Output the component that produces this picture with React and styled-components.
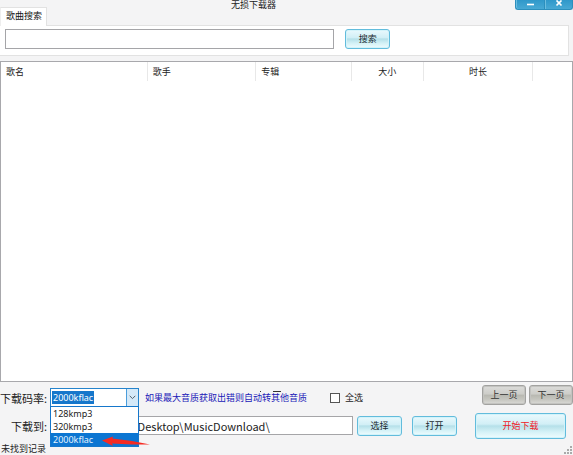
import React, { useState } from "react";
import styled, { createGlobalStyle } from "styled-components";

const GlobalStyle = createGlobalStyle`
  *, *::before, *::after { box-sizing: border-box; }
  body {
    margin: 0;
    background: #f4f4f5;
    color: #222;
    font: 9px/12px "Noto Sans", "Noto Sans CJK SC", sans-serif;
  }
  button, input, select { font: inherit; color: inherit; margin: 0; }
`;

const Window = styled.main`
  display: flex;
  flex-direction: column;
  height: 100vh;
  overflow: hidden;
  position: relative;
`;

const TitleBar = styled.header`
  display: flex;
  height: 7px;
  flex: none;
`;

const Title = styled.h1`
  flex: 1;
  margin: 0;
  padding-right: 8px;
  font-size: 9px;
  font-weight: 400;
  line-height: 9px;
  text-align: center;
`;

const WindowButton = styled.button`
  display: flex;
  align-items: flex-start;
  justify-content: center;
  width: 29px;
  height: 10px;
  padding: 0;
  border: 1px solid #2c8fbd;
  border-top: 0;
  border-right-width: ${(p) => (p.$last ? "1px" : "0")};
  border-radius: ${(p) => (p.$last ? "0 0 3px 0" : "0 0 0 3px")};
  background: linear-gradient(#2f98ca, #48a9d4);
  box-shadow: inset 1px 0 #6cbddf;
`;

const TabList = styled.div`
  display: flex;
  flex: none;
`;

const Tab = styled.button`
  height: 19px;
  padding: 0 4px 2px 5px;
  border: 1px solid #e2e2e2;
  border-bottom: 0;
  border-left-color: #eee;
  background: #fff;
  margin-bottom: -1px;
  z-index: 1;
  color: #111;
`;

const SearchPanel = styled.form`
  display: flex;
  align-items: center;
  gap: 11px;
  flex: none;
  height: 31px;
  margin-right: 4px;
  padding: 0 0 4px 5px;
  border: 1px solid #e2e2e2;
  border-left: 0;
  background: #fff;
`;

const TextInput = styled.input`
  min-width: 0;
  height: ${(p) => (p.$path ? "19px" : "20px")};
  width: ${(p) => (p.$path ? "auto" : "58.5%")};
  flex: ${(p) => (p.$path ? "1" : "none")};
  padding: 0 2px;
  border: 1px solid #a5a5a8;
  border-radius: 0;
  background: #fff;
  font-family: "Noto Sans CJK SC", sans-serif;
  font-size: 11px;
  outline: 0;
`;

const GlassButton = styled.button`
  flex: none;
  width: ${(p) => (p.$large ? "91px" : "45px")};
  height: ${(p) => (p.$large ? "26px" : "20px")};
  padding: 0;
  border: 1px solid #62bcdc;
  border-radius: 3px;
  background: linear-gradient(#e9f9fd 0%, #d2eff6 42%, #b5e0e9 50%, #d5f2f7 75%, #effcfe 100%);
  box-shadow: inset 0 0 0 1px #d3f3fa;
  color: ${(p) => (p.$large ? "#f02028" : "#1c2b30")};
`;

const PageButton = styled.button`
  width: 44px;
  height: 20px;
  padding: 0;
  border: 1px solid #a2a2a0;
  border-radius: 3px;
  background: linear-gradient(#dcdcda 0%, #cdcdc9 44%, #b9b9b2 52%, #c6c6c0 75%, #dadad7 100%);
  box-shadow: inset 0 0 0 1px #c3c3c0;
  color: #333;
`;

const Results = styled.section`
  flex: 1;
  min-height: 0;
  margin-top: 5px;
  border: 1px solid #a8a8ac;
  background: #fff;
`;

const Table = styled.table`
  width: 100%;
  border-collapse: collapse;
  table-layout: fixed;
`;

const HeadCell = styled.th`
  width: ${(p) => p.$width};
  height: 19px;
  padding: 0 5px;
  border-right: ${(p) => (p.$end ? "0" : "1px solid #e8e8e8")};
  font-weight: 400;
  text-align: ${(p) => p.$align || "left"};
`;

const Footer = styled.footer`
  display: grid;
  grid-template-columns: 47px minmax(0, 1fr);
  column-gap: 3px;
  flex: none;
  height: 73px;
  grid-template-rows: 31px 25px 17px;
  align-items: center;
`;

const FieldLabel = styled.label`
  font-family: "Noto Sans CJK SC", sans-serif;
  font-size: 11px;
  white-space: nowrap;
  text-align: right;
`;

const Row = styled.div`
  display: flex;
  align-items: center;
`;

const Combo = styled.div`
  position: relative;
  flex: none;
  width: 89px;
`;

const RateSelect = styled.select`
  display: block;
  appearance: none;
  width: 100%;
  height: 19px;
  padding: 0 2px;
  border: 1px solid #2583cc;
  border-radius: 0;
  background: linear-gradient(#1677cb, #1677cb) 1px 2px / 42px 13px no-repeat #fff;
  color: #fff;
  outline: 0;
`;

const Chevron = styled.span`
  position: absolute;
  inset: 1px 1px 1px auto;
  display: grid;
  place-items: center;
  width: 12px;
  border-left: 1px solid #4b9ddb;
  background: #d5e9f8;
  pointer-events: none;
`;

const Options = styled.ul`
  position: absolute;
  z-index: 2;
  top: 100%;
  left: 0;
  width: 100%;
  margin: -1px 0 0;
  padding: 0;
  border: 1px solid #1677cb;
  background: #fff;
  list-style: none;
`;

const Option = styled.li`
  height: 13px;
  padding: 0 2px;
  line-height: 13px;
  background: ${(p) => (p.$selected ? "#0c76d2" : "#fff")};
  color: ${(p) => (p.$selected ? "#e5f4ff" : "#222")};
`;

const Pointer = styled.svg`
  position: absolute;
  z-index: 3;
  top: 48px;
  left: 52px;
`;

const Hint = styled.p`
  position: relative;
  margin: 0 0 0 6px;
  color: #2119b8;
  white-space: nowrap;
`;

const Ticks = styled.svg`
  position: absolute;
  top: -1px;
  right: 25px;
`;

const CheckLabel = styled.label`
  display: flex;
  align-items: center;
  gap: 5px;
  margin-left: 23px;
  white-space: nowrap;
`;

const Check = styled.input`
  appearance: none;
  width: 10px;
  height: 10px;
  border: 1px solid #555;
  background: ${(p) => (p.checked ? "#1677cb" : "#fff")};
`;

const Pager = styled.nav`
  display: flex;
  gap: 3px;
  margin: 0 0 6px auto;
`;

const PathRow = styled(Row)`
  padding-right: 7px;
`;

const Actions = styled.div`
  display: flex;
  align-items: center;
  gap: 10px;
  margin: 0 18px 0 4px;
`;

const Status = styled.output`
  grid-column: 1 / -1;
  align-self: end;
  padding-left: 1px;
`;

const Grip = styled.svg`
  position: absolute;
  right: 0;
  bottom: 0;
`;

const RATES = ["128kmp3", "320kmp3", "2000kflac"];
const COLUMNS = [
  { name: "歌名", width: "25.6%" },
  { name: "歌手", width: "19%" },
  { name: "专辑", width: "16.7%" },
  { name: "大小", width: "12.7%", align: "center" },
  { name: "时长", width: "19.1%", align: "center" },
];
const DOTS = [[6, 0], [3, 3], [6, 3], [0, 6], [3, 6], [6, 6]];

export default function App() {
  const [rate, setRate] = useState("2000kflac");
  const [query, setQuery] = useState("");
  const [path, setPath] = useState("C:\\Users\\Admin\\Desktop\\MusicDownload\\");
  const [all, setAll] = useState(false);

  return (
    <>
      <GlobalStyle />
      <Window>
        <TitleBar>
          <Title>无损下载器</Title>
          <WindowButton aria-label="最小化">
            <svg width="9" height="8" viewBox="0 0 9 8">
              <path d="M1 4.5h7" stroke="#fff" strokeWidth="1.6" />
            </svg>
          </WindowButton>
          <WindowButton $last aria-label="关闭">
            <svg width="8" height="8" viewBox="0 0 8 8">
              <path d="M1.5 0.5l5 5M6.5 0.5l-5 5" stroke="#fff" strokeWidth="1.7" />
            </svg>
          </WindowButton>
        </TitleBar>

        <TabList role="tablist">
          <Tab role="tab" aria-selected="true">歌曲搜索</Tab>
        </TabList>
        <SearchPanel onSubmit={(e) => e.preventDefault()}>
          <TextInput aria-label="歌曲搜索" value={query} onChange={(e) => setQuery(e.target.value)} />
          <GlassButton type="submit">搜索</GlassButton>
        </SearchPanel>

        <Results>
          <Table>
            <thead>
              <tr>
                {COLUMNS.map((c) => (
                  <HeadCell key={c.name} scope="col" $width={c.width} $align={c.align}>{c.name}</HeadCell>
                ))}
                <HeadCell as="td" $end />
              </tr>
            </thead>
          </Table>
        </Results>

        <Footer>
          <FieldLabel htmlFor="rate">下载码率:</FieldLabel>
          <Row>
            <Combo>
              <RateSelect id="rate" value={rate} onChange={(e) => setRate(e.target.value)}>
                {RATES.map((r) => <option key={r}>{r}</option>)}
              </RateSelect>
              <Chevron>
                <svg width="7" height="5" viewBox="0 0 7 5">
                  <path d="M0.7 0.8l2.8 2.8 2.8-2.8" fill="none" stroke="#53616c" />
                </svg>
              </Chevron>
              <Options role="listbox" aria-label="下载码率">
                {RATES.map((r) => (
                  <Option key={r} role="option" aria-selected={r === rate} $selected={r === rate} onClick={() => setRate(r)}>
                    {r}
                  </Option>
                ))}
              </Options>
              <Pointer width="49" height="11" viewBox="0 0 49 11" aria-hidden="true">
                <path d="M0 4.5L11 0.5L10.5 2.5L30 5L48 8.5L30 8.5L10 7.5L11 10Z" fill="#f52b22" />
              </Pointer>
            </Combo>
            <Hint>
              如果最大音质获取出错则自动转其他音质
              <Ticks width="22" height="2" viewBox="0 0 22 2" aria-hidden="true">
                <path d="M0 0.5h1M13 0.5h8" stroke="#333" />
              </Ticks>
            </Hint>
            <CheckLabel>
              <Check type="checkbox" checked={all} onChange={(e) => setAll(e.target.checked)} />
              全选
            </CheckLabel>
            <Pager>
              <PageButton>上一页</PageButton>
              <PageButton>下一页</PageButton>
            </Pager>
          </Row>

          <FieldLabel htmlFor="path">下载到:</FieldLabel>
          <PathRow>
            <TextInput $path id="path" value={path} onChange={(e) => setPath(e.target.value)} />
            <Actions>
              <GlassButton>选择</GlassButton>
              <GlassButton>打开</GlassButton>
            </Actions>
            <GlassButton $large>开始下载</GlassButton>
          </PathRow>
          <Status>未找到记录</Status>
        </Footer>
        <Grip width="9" height="9" viewBox="0 0 9 9" aria-hidden="true">
          {DOTS.map(([x, y]) => (
            <rect key={`${x}-${y}`} x={x} y={y} width="2" height="2" fill="#aaa" />
          ))}
        </Grip>
      </Window>
    </>
  );
}
